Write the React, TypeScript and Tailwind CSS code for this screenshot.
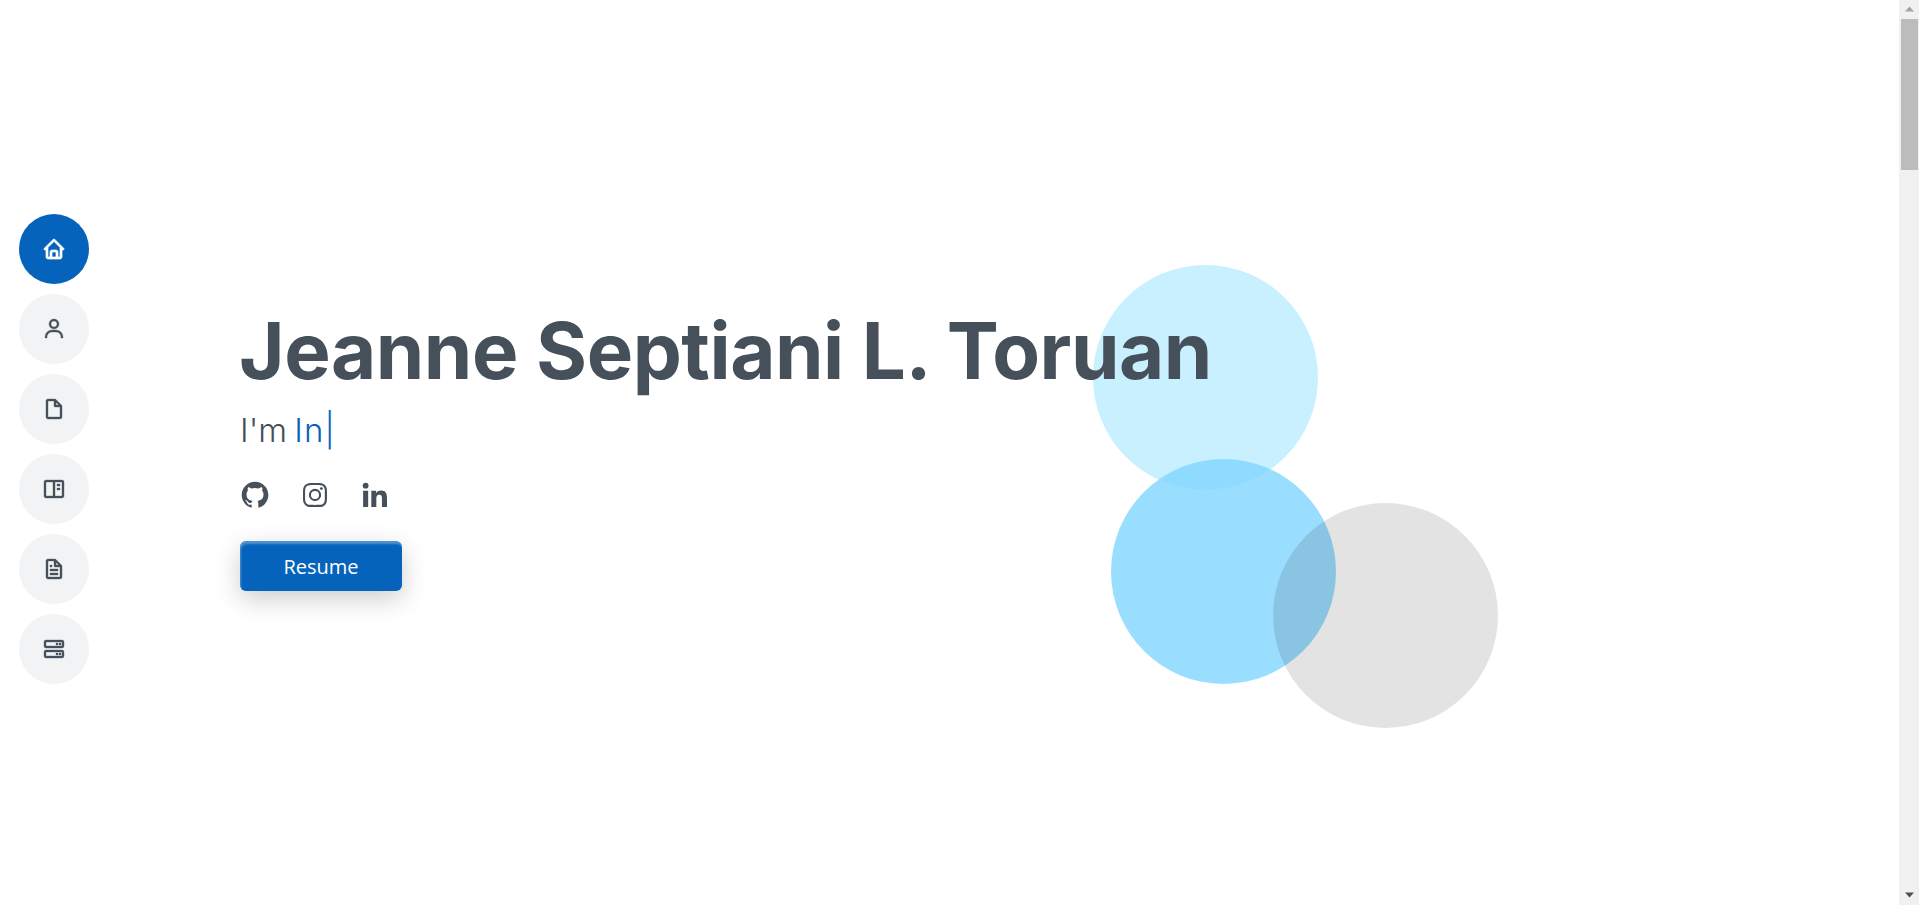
import { BiBookContent, BiFile, BiFileBlank, BiHome, BiServer, BiUser } from "react-icons/bi";
import { BiLogoGithub, BiLogoInstagram, BiLogoLinkedin } from "react-icons/bi";

const navItems = [
  { icon: BiHome, active: true },
  { icon: BiUser, active: false },
  { icon: BiFileBlank, active: false },
  { icon: BiBookContent, active: false },
  { icon: BiFile, active: false },
  { icon: BiServer, active: false },
];

const socials = [BiLogoGithub, BiLogoInstagram, BiLogoLinkedin];

export default function App() {
  return (
    <div className="flex h-[905px] overflow-hidden bg-white font-['Open_Sans',sans-serif] text-[#45505b]">
      <main className="relative flex flex-1 items-center">
        {/* decorative circles sit behind the hero */}
        <div className="absolute left-[1093px] top-[265px] h-[225px] w-[225px] rounded-full bg-[#c9f0ff]" />
        <div className="absolute left-[1111px] top-[459px] h-[225px] w-[225px] rounded-full bg-[#81d6ff] opacity-80" />
        <div className="absolute left-[1273px] top-[503px] h-[225px] w-[225px] rounded-full bg-[rgba(0,0,0,0.11)]" />

        <nav className="absolute left-[19px] top-[214px] flex flex-col gap-2.5">
          {navItems.map(({ icon: Icon, active }, i) => (
            <a
              key={i}
              className={`flex h-[70px] w-[70px] items-center justify-center rounded-full text-[24px] ${
                active ? "bg-[#0563bb] text-white" : "bg-[#f2f3f5] text-[#45505b]"
              }`}
            >
              <Icon stroke="currentColor" strokeWidth={active ? 0.7 : 0.35} />
            </a>
          ))}
        </nav>

        <section className="relative ml-[239px] mb-[11px]">
          <h1 className="font-['Inter',sans-serif] text-[78px] font-bold leading-[96px] tracking-[-0.45px] text-[#45505b]">
            Jeanne Septiani L. Toruan
          </h1>
          <p className="ml-px mt-[10px] font-['Inter',sans-serif] text-[33px] font-[350] leading-[42px]">
            I'm <span className="-ml-[2px] tracking-[1px] text-[#0563bb]">In|</span>
          </p>
          <div className="mt-7 flex gap-7 text-[32px]">
            {socials.map((Icon, i) => (
              <Icon key={i} />
            ))}
          </div>
          <button className="ml-px mt-[30px] h-[50px] w-[162px] rounded-md bg-[#0563bb] pt-px text-[20px] text-white shadow-[inset_1px_3px_2px_rgba(255,255,255,0.3),0_8px_26px_rgba(0,0,0,0.2)]">
            Resume
          </button>
        </section>
      </main>

      <div className="flex w-5 flex-col items-center bg-[#f1f1f1] pl-px">
        <svg width="17" height="19" viewBox="0 0 17 19" className="shrink-0">
          <path d="M8.5 6.5 L13 11.5 H4 Z" fill="#a3a3a3" />
        </svg>
        <div className="h-[151px] w-[17px] bg-[#bcbcbc]" />
        <div className="flex-1" />
        <svg width="17" height="17" viewBox="0 0 17 17" className="shrink-0">
          <path d="M4 4.5 H13 L8.5 9.5 Z" fill="#505050" />
        </svg>
      </div>
    </div>
  );
}
